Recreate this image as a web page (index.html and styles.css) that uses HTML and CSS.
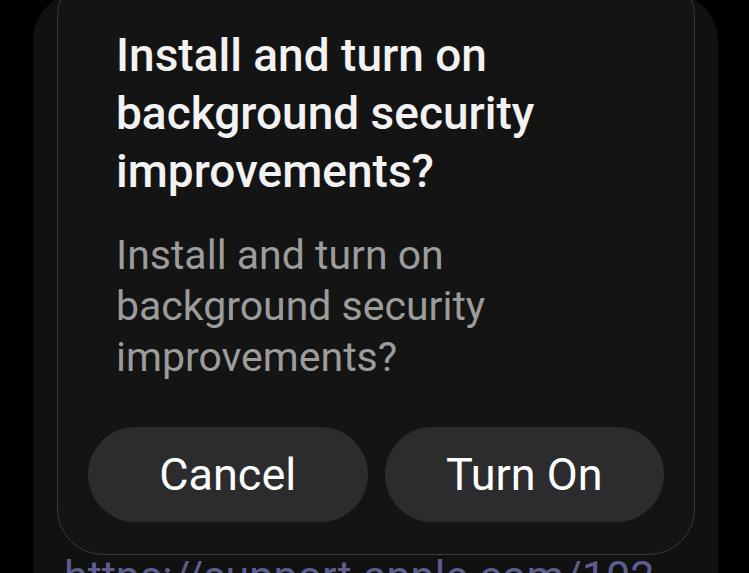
FILE: index.html
```html
<!DOCTYPE html>
<html lang="en">
<head>
<meta charset="utf-8">
<title>Background security improvements</title>
<link rel="stylesheet" href="styles.css">
</head>
<body>
  <div class="panel">
    <div class="dialog">
      <h1 class="title">Install and turn on background security improvements?</h1>
      <p class="message">Install and turn on background security improvements?</p>
      <div class="actions">
        <button class="btn">Cancel</button>
        <button class="btn">Turn On</button>
      </div>
    </div>
    <div class="link">https://support.apple.com/102</div>
  </div>
</body>
</html>
```

FILE: styles.css
```css
html, body {
  margin: 0;
  padding: 0;
  background: #000;
  height: 100%;
  overflow: hidden;
}
body {
  font-family: Roboto, "Noto Sans", sans-serif;
}
.panel {
  margin: -7px 31px 0 33px;
  background: #111111;
  border-radius: 47px 47px 0 0;
  padding: 0 23px 0 24px;
  min-height: 700px;
}
.dialog {
  position: relative;
  top: -23px;
  margin-bottom: -23px;
  background: #141414;
  border: 1px solid #3a3a3c;
  border-radius: 46px;
  padding: 55px 30px 32px 30px;
}
.title {
  margin: 0 0 30px 28px;
  font-size: 46px;
  line-height: 58px;
  font-weight: 500;
  color: #f2f2f2;
  width: 470px;
}
.message {
  margin: 0 0 44px 28px;
  font-size: 41px;
  line-height: 51px;
  font-weight: 400;
  color: #9c9c9c;
  width: 420px;
}
.actions {
  display: flex;
  gap: 17px;
}
.btn {
  flex: 1;
  height: 95px;
  border: none;
  border-radius: 48px;
  background: #2c2c2e;
  color: #ffffff;
  font-family: Roboto, "Noto Sans", sans-serif;
  font-size: 45px;
  font-weight: 400;
  padding: 0;
}
.link {
  margin: -4px 0 0 7px;
  font-size: 43px;
  line-height: 42px;
  color: #5d5d8f;
  white-space: nowrap;
}
```
